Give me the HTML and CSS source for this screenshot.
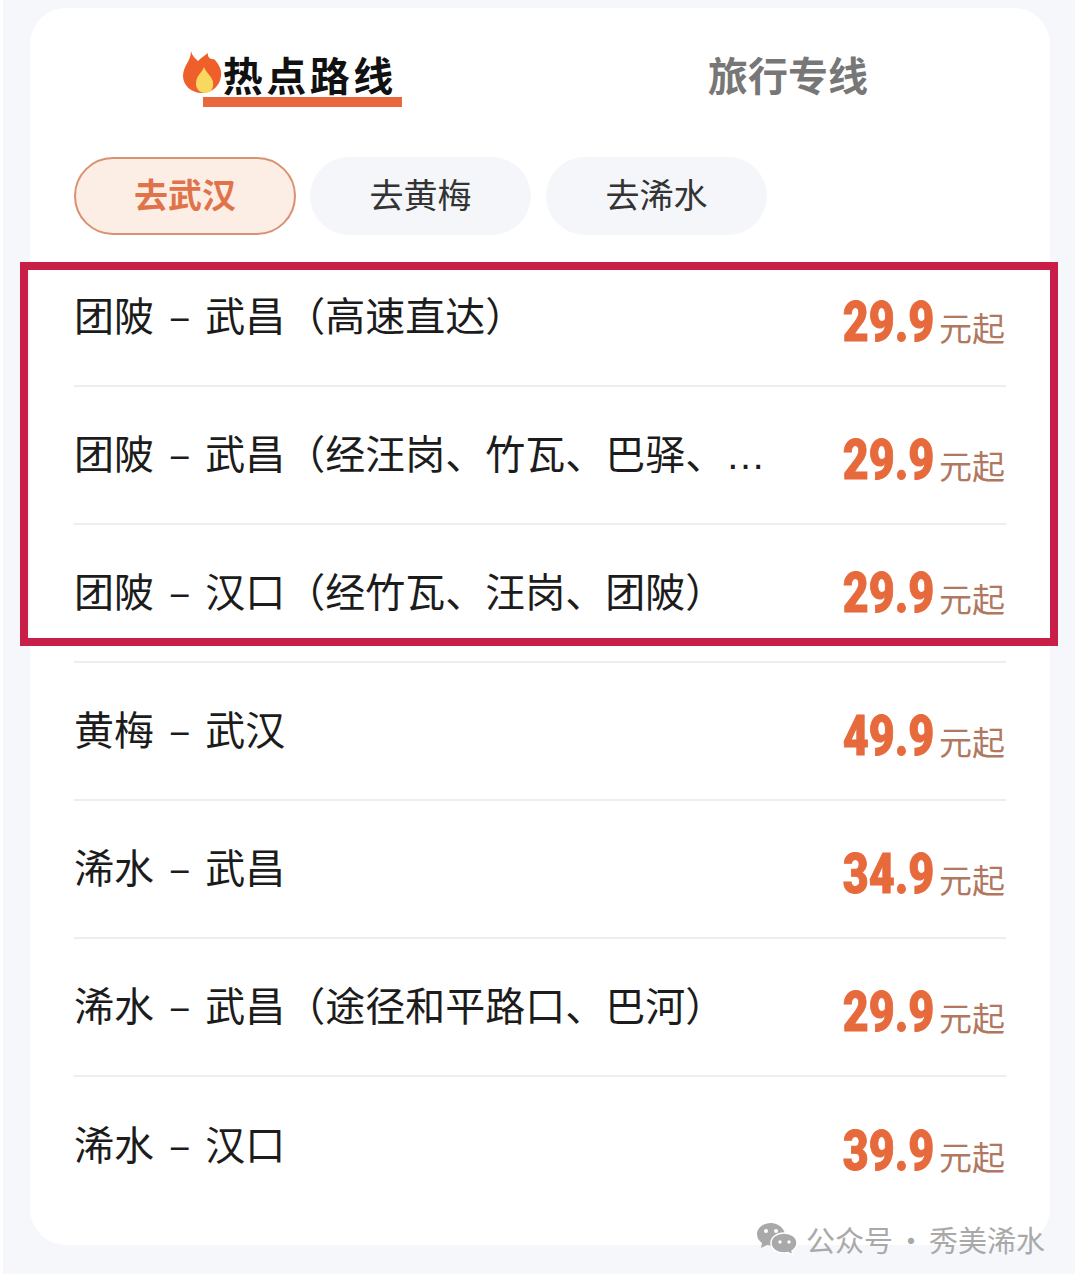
FILE: index.html
```html
<!DOCTYPE html>
<html lang="zh-CN">
<head>
    <meta charset="UTF-8">
    <title>热点路线</title>
    <link rel="stylesheet" href="styles.css">
</head>
<body>
    <div class="page">
        <div class="card">
            <div class="tabs">
                <div class="tab tab-active">
                    <svg class="flame" viewBox="0 0 40 44">
                        <path fill="#ef5f2c" d="M8 0C9 5 13 8 15 10C18 7 22 4 25 2C24 6 28 9 31 8C36 13 39 19 38 25C37 35 29 42 19 42C8 42 0 34 0 25C0 15 8 10 8 0z"/>
                        <path fill="#f9d860" d="M21 16C19 22 13 24 13 33C13 38 17 42 22 42C28 42 31 37 30 31C29 25 23 22 21 16z"/>
                    </svg>
                    <span class="tab-label">热点路线</span>
                </div>
                <div class="tab tab-other">旅行专线</div>
            </div>

            <div class="pills">
                <div class="pill pill-active">去武汉</div>
                <div class="pill">去黄梅</div>
                <div class="pill">去浠水</div>
            </div>

            <div class="routes">
                <div class="route">
                    <span class="route-name">团陂 – 武昌（高速直达）</span>
                    <span class="price"><b>29.9</b>元起</span>
                </div>
                <div class="route">
                    <span class="route-name">团陂 – 武昌（经汪岗、竹瓦、巴驿、<span class="dots">…</span></span>
                    <span class="price"><b>29.9</b>元起</span>
                </div>
                <div class="route">
                    <span class="route-name">团陂 – 汉口（经竹瓦、汪岗、团陂）</span>
                    <span class="price price-up"><b>29.9</b>元起</span>
                </div>
                <div class="route">
                    <span class="route-name">黄梅 – 武汉</span>
                    <span class="price"><b>49.9</b>元起</span>
                </div>
                <div class="route">
                    <span class="route-name">浠水 – 武昌</span>
                    <span class="price"><b>34.9</b>元起</span>
                </div>
                <div class="route">
                    <span class="route-name">浠水 – 武昌（途径和平路口、巴河）</span>
                    <span class="price"><b>29.9</b>元起</span>
                </div>
                <div class="route">
                    <span class="route-name">浠水 – 汉口</span>
                    <span class="price"><b>39.9</b>元起</span>
                </div>
            </div>
        </div>
    </div>

    <!-- red box drawn over the first three rows -->
    <div class="highlight"></div>

    <div class="watermark">
        <svg class="wechat" viewBox="0 0 40 34">
            <path fill="#a9a9a9" d="M14 1C6 1 0 6 0 12c0 4 2 7 5 9l-1 5 6-3c1 0 3 .5 4 .5C20 24 28 24 28 12 27 6 21 1 14 1z"/>
            <path fill="#a9a9a9" stroke="#fff" stroke-width="1.500" d="M27 11c-7 0-13 4-13 10s6 10 13 10c1 0 3 0 4-.5l5 2.500-1-4c3-2 5-5 5-8 0-6-6-10-13-10z"/>
            <circle cx="9" cy="9" r="2" fill="#fff"/>
            <circle cx="19" cy="9" r="2" fill="#fff"/>
            <circle cx="23" cy="20" r="1.700" fill="#fff"/>
            <circle cx="32" cy="20" r="1.700" fill="#fff"/>
        </svg>
        <span class="watermark-text">公众号 · 秀美浠水</span>
    </div>
</body>
</html>
```

FILE: styles.css
```css
html, body {
    margin: 0;
    padding: 0;
}
body {
    position: relative;
    width: 1080px;
    height: 1281px;
    overflow: hidden;
    background: #fff;
    font-family: "Noto Sans CJK SC", "Noto Sans", sans-serif;
    color: #222;
}
.page {
    width: 1072px;
    height: 1274px;
    margin-left: 3px;
    padding-top: 8px;
    box-sizing: border-box;
    background: #f5f7fb;
}
.card {
    margin: 0 25px 0 27px;
    height: 1237px;
    box-sizing: border-box;
    padding: 0 44px;
    background: #fff;
    border-radius: 36px;
}
.tabs {
    display: flex;
    height: 149px;
    margin: 0 -44px;
    padding-bottom: 31px;
    box-sizing: border-box;
}
.tab {
    flex: 1 1 0;
    box-sizing: border-box;
    display: flex;
    align-items: center;
    justify-content: center;
    font-size: 40px;
    font-weight: 700;
    color: #777;
}
.tab-other {
    padding-top: 13px;
    padding-right: 12px;
}
.tab-active {
    color: #111;
    padding-top: 13px;
    padding-left: 8px;
    isolation: isolate;
}
.flame {
    width: 40px;
    height: 44px;
    position: relative;
    top: -1px;
}
.tab-label {
    line-height: 46px;
    letter-spacing: 3.500px;
    margin-right: -3.500px;
    position: relative;
}
.tab-label::after {
    content: "";
    position: absolute;
    left: -20px;
    right: -5px;
    bottom: -10px;
    height: 10px;
    background: #e8673c;
    z-index: -1;
}
.pills {
    display: flex;
    gap: 15px;
}
.pill {
    width: 221px;
    height: 78px;
    box-sizing: border-box;
    border-radius: 39px;
    display: flex;
    align-items: center;
    justify-content: center;
    padding-bottom: 5px;
    font-size: 34px;
    color: #333;
    background: #f4f6fa;
}
.pill-active {
    width: 222px;
    margin-right: -1px;
    background: #fdeee5;
    border: 2px solid #d89272;
    color: #e0734a;
    font-weight: 700;
}
.routes {
    margin-top: 15px;
}
.route {
    height: 137px;
    box-sizing: border-box;
    display: flex;
    align-items: center;
    justify-content: space-between;
    border-bottom: 2px solid #eceef1;
    margin-bottom: 1px;
}
.route:last-child {
    border-bottom: none;
}
.route-name {
    font-size: 40px;
    font-weight: 400;
    color: #1c1c1c;
    white-space: nowrap;
    word-spacing: 6px;
    padding-bottom: 8px;
}
.dots {
    font-family: "Liberation Sans", sans-serif;
}
.price {
    display: flex;
    align-items: baseline;
    font-size: 33px;
    color: #b0795f;
    padding-top: 8px;
    margin-right: 1px;
}
.price-up {
    padding-top: 0;
    padding-bottom: 2px;
}
.price b {
    display: inline-block;
    font-family: Roboto, "Liberation Sans", sans-serif;
    font-size: 56px;
    font-weight: 900;
    color: #e66a3c;
    -webkit-text-stroke: 1px #e66a3c;
    margin-right: 5px;
    transform: scaleX(0.8);
    transform-origin: right center;
}
.highlight {
    position: absolute;
    left: 20px;
    top: 262px;
    width: 1038px;
    height: 384px;
    box-sizing: border-box;
    border: 8px solid #c81e47;
}
.watermark {
    position: absolute;
    left: 757px;
    top: 1221px;
    display: flex;
    align-items: center;
    gap: 9px;
    font-size: 29px;
    line-height: 36px;
    color: #a9a9a9;
}
.watermark-text {
    word-spacing: -3px;
}
.wechat {
    width: 40px;
    height: 34px;
}
```
